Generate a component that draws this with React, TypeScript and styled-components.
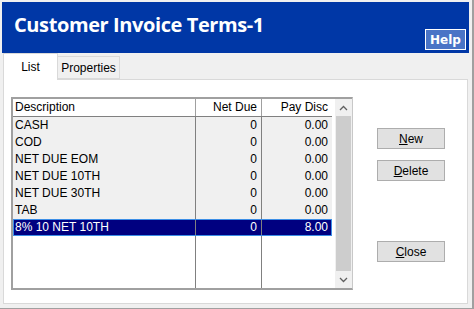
import React from "react";
import styled, { createGlobalStyle } from "styled-components";

const GlobalStyle = createGlobalStyle`
	html, body {
		margin: 0;
		padding: 0;
		background: #f0f0f0;
	}
	body {
		font-family: "Liberation Sans", Arial, sans-serif;
		font-size: 12px;
		color: #000;
	}
`;

interface ITerm {
	desc: string;
	netDue: string;
	payDisc: string;
}

const terms: ITerm[] = [
	{ desc: "CASH", netDue: "0", payDisc: "0.00" },
	{ desc: "COD", netDue: "0", payDisc: "0.00" },
	{ desc: "NET DUE EOM", netDue: "0", payDisc: "0.00" },
	{ desc: "NET DUE 10TH", netDue: "0", payDisc: "0.00" },
	{ desc: "NET DUE 30TH", netDue: "0", payDisc: "0.00" },
	{ desc: "TAB", netDue: "0", payDisc: "0.00" },
	{ desc: "8% 10 NET 10TH", netDue: "0", payDisc: "8.00" },
];

const selected = 6;

const Chevron: React.FC<{ down?: boolean }> = ({ down }) => (
	<svg width="9" height="6" viewBox="0 0 9 6">
		<polyline points={down ? "1,1 4.5,4.5 8,1" : "1,5 4.5,1.5 8,5"} fill="none" stroke="#606060" strokeWidth="1.3" />
	</svg>
);

const App: React.FC = () => {
	return (
		<>
			<GlobalStyle />
			<Window>
				<TitleBar>
					<Title>Customer Invoice Terms-1</Title>
					<HelpButton>Help</HelpButton>
				</TitleBar>
				<TabStrip>
					<Tab active>List</Tab>
					<Tab>Properties</Tab>
				</TabStrip>
				<Panel>
					<ListBox>
						<TableArea>
							<HeaderRow>
								<HeadCell>Description</HeadCell>
								<HeadCell right>Net Due</HeadCell>
								<HeadCell right>Pay Disc</HeadCell>
							</HeaderRow>
							{terms.map((t, i) => (
								<Row key={i} selected={i === selected}>
									<Cell>{t.desc}</Cell>
									<Cell right>{t.netDue}</Cell>
									<Cell right>{t.payDisc}</Cell>
								</Row>
							))}
							<FillerRow>
								<Cell />
								<Cell />
								<Cell />
							</FillerRow>
						</TableArea>
						<ScrollBar>
							<ScrollArrow>
								<Chevron />
							</ScrollArrow>
							<Thumb />
							<ScrollArrow>
								<Chevron down />
							</ScrollArrow>
						</ScrollBar>
					</ListBox>
					<Buttons>
						<Button>
							<u>N</u>ew
						</Button>
						<Button>
							<u>D</u>elete
						</Button>
						<Button gap={60}>
							<u>C</u>lose
						</Button>
					</Buttons>
				</Panel>
			</Window>
		</>
	);
};

export default App;

const Window = styled.div`
	width: 474px;
	height: 309px;
	box-sizing: border-box;
	padding: 2px 3px 0 2px;
	border-right: 2px solid #a0a0a0;
	border-bottom: 1px solid #a0a0a0;
	background: #f0f0f0;
	display: flex;
	flex-direction: column;
`;

const TitleBar = styled.div`
	height: 51px;
	background: #0037a6;
	display: flex;
	justify-content: space-between;
	align-items: flex-start;
	padding: 0 3px 0 12px;
`;

const Title = styled.h1`
	margin: 11px 0 0;
	font-family: "Open Sans", "Liberation Sans", sans-serif;
	font-weight: 700;
	font-size: 20px;
	line-height: 24px;
	color: #fff;
	letter-spacing: -0.4px;
`;

const HelpButton = styled.div`
	align-self: flex-end;
	margin-bottom: 3px;
	width: 41px;
	height: 21px;
	box-sizing: border-box;
	border: 1px solid #fff;
	background: #4a74c6;
	color: #fff;
	font-family: "DejaVu Sans", Verdana, sans-serif;
	font-weight: 700;
	font-size: 12px;
	display: flex;
	align-items: center;
	justify-content: center;
`;

const TabStrip = styled.div`
	display: flex;
	align-items: flex-end;
	height: 27px;
	margin-left: 1px;
	position: relative;
	z-index: 1;
	margin-bottom: -1px;
`;

const Tab = styled.div<{ active?: boolean }>`
	box-sizing: border-box;
	height: ${(props) => (props.active ? "27px" : "23px")};
	margin-bottom: ${(props) => (props.active ? "0" : "1px")};
	padding: ${(props) => (props.active ? "6px 0 0" : "4px 0 0")};
	width: ${(props) => (props.active ? "55px" : "62px")};
	text-align: center;
	background: ${(props) => (props.active ? "#fff" : "#f0f0f0")};
	border: 1px solid #d9d9d9;
	border-bottom: ${(props) => (props.active ? "none" : "1px solid #d9d9d9")};
	border-left: ${(props) => (props.active ? "1px solid #d9d9d9" : "none")};
`;

const Panel = styled.div`
	margin-left: 1px;
	width: 465px;
	height: 225px;
	box-sizing: border-box;
	background: #fff;
	border: 1px solid #d9d9d9;
	display: flex;
	padding: 17px 0 0 7px;
`;

const ListBox = styled.div`
	width: 342px;
	height: 193px;
	box-sizing: border-box;
	border: 1px solid #a0a0a0;
	border-right-color: #c8c8c8;
	border-bottom: 2px solid #a0a0a0;
	box-shadow: inset 1px 1px 0 #a0a0a0;
	padding: 1px 0 0 1px;
	display: flex;
`;

const TableArea = styled.div`
	flex: 1;
	display: flex;
	flex-direction: column;
`;

const columns = "183px 66px 1fr";

const HeaderRow = styled.div`
	display: grid;
	grid-template-columns: ${columns};
	height: 18px;
	box-sizing: border-box;
	border-bottom: 1px solid #808080;
	background: #fff;
`;

const HeadCell = styled.div<{ right?: boolean }>`
	padding: 0 4px 0 2px;
	line-height: 17px;
	text-align: ${(props) => (props.right ? "right" : "left")};
	border-right: 1px solid #a0a0a0;
	&:last-child {
		border-right: none;
	}
`;

const Row = styled.div<{ selected?: boolean }>`
	display: grid;
	grid-template-columns: ${columns};
	height: 17px;
	background: ${(props) => (props.selected ? "#000080" : "#f0f0f0")};
	color: ${(props) => (props.selected ? "#fff" : "#000")};
	outline: ${(props) => (props.selected ? "1px solid #3c8ee6" : "none")};
	outline-offset: -1px;
`;

const FillerRow = styled.div`
	flex: 1;
	display: grid;
	grid-template-columns: ${columns};
	background: #fff;
`;

const Cell = styled.div<{ right?: boolean }>`
	padding: 0 4px 0 2px;
	line-height: 17px;
	white-space: nowrap;
	text-align: ${(props) => (props.right ? "right" : "left")};
	border-right: 1px solid #808080;
	&:last-child {
		border-right: none;
	}
`;

const ScrollBar = styled.div`
	width: 17px;
	background: #f0f0f0;
	display: flex;
	flex-direction: column;
	margin-left: 3px;
`;

const ScrollArrow = styled.div`
	height: 17px;
	display: flex;
	align-items: center;
	justify-content: center;
`;

const Thumb = styled.div`
	flex: 1;
	margin: 0 1px;
	background: #cdcdcd;
`;

const Buttons = styled.div`
	display: flex;
	flex-direction: column;
	gap: 11px;
	padding: 31px 0 0 24px;
`;

const Button = styled.div<{ gap?: number }>`
	width: 68px;
	height: 21px;
	box-sizing: border-box;
	margin-top: ${(props) => (props.gap ? `${props.gap - 11}px` : "0")};
	background: #e1e1e1;
	border: 1px solid #adadad;
	display: flex;
	align-items: center;
	justify-content: center;
`;
